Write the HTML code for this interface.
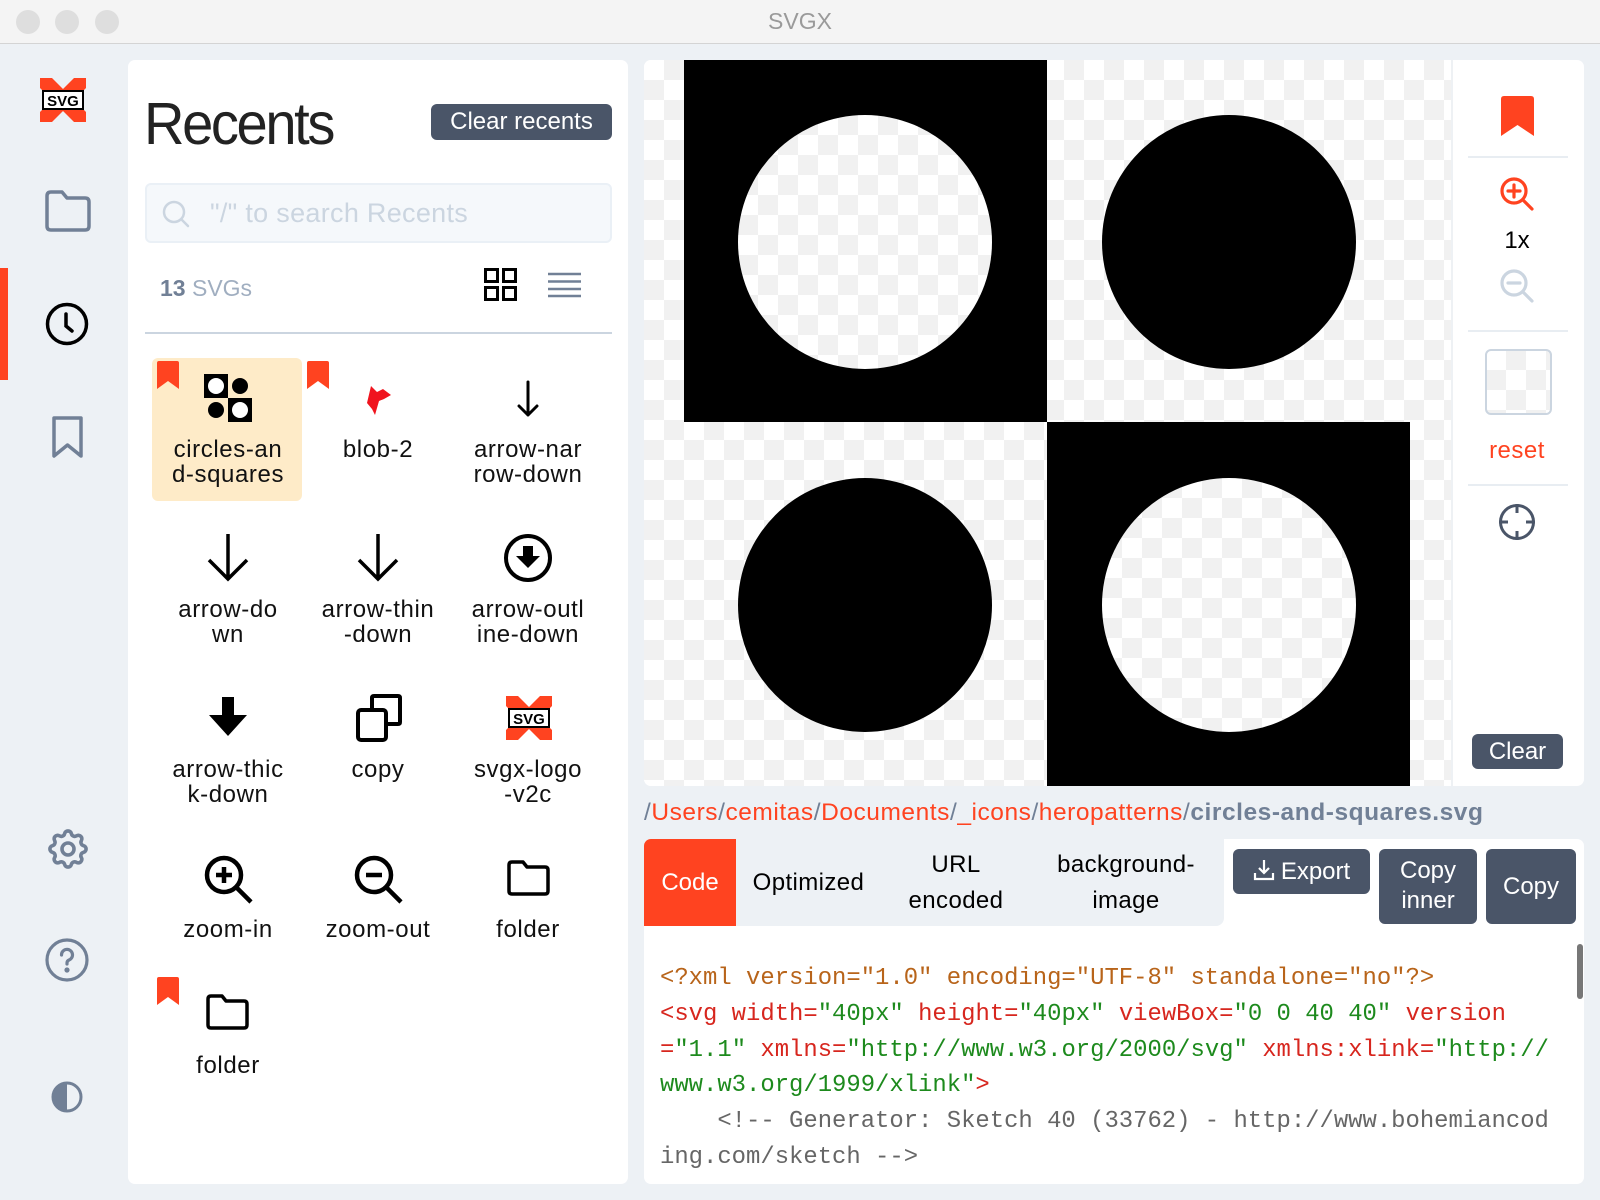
<!DOCTYPE html>
<html><head><meta charset="utf-8"><style>
*{box-sizing:border-box;margin:0;padding:0}
body{width:1600px;height:1200px;background:#edf1f5;font-family:"Liberation Sans",sans-serif;position:relative;overflow:hidden}
.a{position:absolute}
.tb{left:0;top:0;width:1600px;height:44px;background:#f4f4f4;border-bottom:1px solid #d4d4d4}
.dot{width:24px;height:24px;border-radius:50%;background:#dedede;top:10px}
.panel{background:#fff;border-radius:7px}
.lbl{font-size:24px;line-height:24.5px;color:#111;text-align:center;width:150px;letter-spacing:0.6px}
.btn{background:#4a5568;color:#fff;border-radius:6px;font-size:24px;text-align:center}
.code{font-family:"Liberation Mono",monospace;font-size:23.9px;line-height:35.8px;white-space:pre;left:660px;top:961px}
.o{color:#b8641a}.r{color:#d7261e}.g{color:#1d8a1d}.c{color:#666}
.chk{background-color:#fff;background-image:linear-gradient(45deg,#f1f1f1 25%,transparent 25%,transparent 75%,#f1f1f1 75%),linear-gradient(45deg,#f1f1f1 25%,transparent 25%,transparent 75%,#f1f1f1 75%);background-size:40px 40px;background-position:0 0,20px 20px}
.hr{height:2px;background:#e8edf2}
</style></head><body>
<div class="a tb"></div>
<div class="a dot" style="left:16px"></div><div class="a dot" style="left:55px"></div><div class="a dot" style="left:95px"></div>
<div class="a" style="left:0;top:8px;width:1600px;text-align:center;font-size:23px;color:#9a9a9a">SVGX</div>

<div class="a" style="left:0;top:268px;width:8px;height:112px;background:#ff4320"></div>
<svg class="a" style="left:40px;top:78px" width="46" height="44" viewBox="0 0 46 44"><path d="M0 0h12l11 11 11-11h12v10l-9 9v6l9 9v10H34L23 33 12 44H0V34l9-9v-6L0 10z" fill="#ff4320"/><rect x="3" y="13" width="40" height="18" fill="#fff" stroke="#000" stroke-width="2"/><text x="23" y="28" font-size="15" font-family="Liberation Sans" font-weight="bold" text-anchor="middle">SVG</text></svg>
<svg class="a" style="left:45px;top:190px" width="46" height="44" viewBox="0 0 46 44" fill="none" stroke="#718096" stroke-width="3.5" stroke-linejoin="round"><path d="M2 6q0-4 4-4h11l5 6h18q4 0 4 4v24q0 4-4 4H6q-4 0-4-4z"/></svg>
<svg class="a" style="left:45px;top:302px" width="44" height="44" viewBox="0 0 44 44" fill="none" stroke="#000" stroke-width="3.5" stroke-linecap="round"><circle cx="22" cy="22" r="19.5"/><path d="M21 12v12l6 5"/></svg>
<svg class="a" style="left:51px;top:415px" width="34" height="44" viewBox="0 0 34 44" fill="none" stroke="#718096" stroke-width="3.5" stroke-linejoin="round"><path d="M3 3h27v38L16.5 30 3 41z"/></svg>
<svg class="a" style="left:44px;top:825px" width="48" height="48" viewBox="0 0 24 24" fill="none" stroke="#718096" stroke-width="1.8"><path d="M10.3 4.3c.4-1.8 3-1.8 3.4 0a1.7 1.7 0 0 0 2.6 1.1c1.5-.9 3.3.8 2.4 2.4a1.7 1.7 0 0 0 1 2.5c1.8.4 1.8 3 0 3.4a1.7 1.7 0 0 0-1 2.6c.9 1.5-.9 3.3-2.4 2.4a1.7 1.7 0 0 0-2.6 1c-.4 1.8-3 1.8-3.4 0a1.7 1.7 0 0 0-2.6-1c-1.5.9-3.3-.9-2.4-2.4a1.7 1.7 0 0 0-1-2.6c-1.800-.4-1.8-3 0-3.4a1.7 1.7 0 0 0 1-2.5c-.9-1.6.9-3.3 2.4-2.4a1.7 1.7 0 0 0 2.6-1.1z"/><circle cx="12" cy="12" r="3"/></svg>
<svg class="a" style="left:45px;top:938px" width="44" height="44" viewBox="0 0 44 44" fill="none" stroke="#718096" stroke-width="3.2" stroke-linecap="round"><circle cx="22" cy="22" r="20"/><path d="M16.5 17a5.5 5.5 0 1 1 7.5 5c-1.4.6-2 1.5-2 3v1"/><circle cx="22" cy="32" r="1" fill="#718096"/></svg>
<svg class="a" style="left:51px;top:1081px" width="32" height="32" viewBox="0 0 32 32"><circle cx="16" cy="16" r="14" fill="none" stroke="#718096" stroke-width="3"/><path d="M16 2a14 14 0 0 0 0 28z" fill="#718096"/></svg>

<div class="a panel" style="left:128px;top:60px;width:500px;height:1124px"></div>
<div class="a" style="left:144px;top:90px;font-size:59px;color:#222;letter-spacing:-2.5px;transform:scaleX(0.95);transform-origin:left">Recents</div>
<div class="a btn" style="left:431px;top:104px;width:181px;height:36px;line-height:36px">Clear recents</div>
<div class="a" style="left:145px;top:183px;width:467px;height:60px;border:2px solid #eaf0f6;border-radius:6px;background:#f5f8fb"></div>
<svg class="a" style="left:161px;top:199px" width="30" height="30" viewBox="0 0 30 30" fill="none" stroke="#cbd5e0" stroke-width="2.5" stroke-linecap="round"><circle cx="13" cy="13" r="10"/><path d="M21 21l6 6"/></svg>
<div class="a" style="left:210px;top:198px;font-size:27px;color:#cbd5e0;letter-spacing:0.3px">"/" to search Recents</div>
<div class="a" style="left:160px;top:275px;font-size:23px;color:#a0aec0"><b style="color:#718096">13</b> SVGs</div>
<svg class="a" style="left:484px;top:268px" width="33" height="33" viewBox="0 0 33 33" fill="none" stroke="#000" stroke-width="3"><rect x="1.5" y="1.5" width="12" height="12"/><rect x="19.5" y="1.5" width="12" height="12"/><rect x="1.5" y="19.5" width="12" height="12"/><rect x="19.5" y="19.5" width="12" height="12"/></svg>
<svg class="a" style="left:548px;top:272px" width="33" height="26" viewBox="0 0 33 26" stroke="#718096" stroke-width="2.5"><path d="M0 2h33M0 9.5h33M0 17h33M0 24h33"/></svg>
<div class="a" style="left:145px;top:332px;width:467px;height:2px;background:#cbd5e0"></div>

<div class="a" style="left:152px;top:358px;width:150px;height:143px;background:#feebc8;border-radius:6px"></div>
<svg class="a" style="left:157px;top:361px" width="22" height="28" viewBox="0 0 22 28"><path d="M0 2q0-2 2-2h18q2 0 2 2v26l-11-8-11 8z" fill="#ff4320"/></svg>
<svg class="a" style="left:307px;top:361px" width="22" height="28" viewBox="0 0 22 28"><path d="M0 2q0-2 2-2h18q2 0 2 2v26l-11-8-11 8z" fill="#ff4320"/></svg>
<svg class="a" style="left:157px;top:977px" width="22" height="28" viewBox="0 0 22 28"><path d="M0 2q0-2 2-2h18q2 0 2 2v26l-11-8-11 8z" fill="#ff4320"/></svg>

<svg class="a" style="left:204px;top:374px" width="48" height="48" viewBox="0 0 48 48"><rect width="24" height="24"/><rect x="24" y="24" width="24" height="24"/><circle cx="12" cy="12" r="8" fill="#fff"/><circle cx="36" cy="12" r="8"/><circle cx="12" cy="36" r="8"/><circle cx="36" cy="36" r="8" fill="#fff"/></svg>
<svg class="a" style="left:361px;top:384px" width="34" height="36" viewBox="0 0 34 36"><path d="M10 2l6 6 6-3 8 6-7 4-5 2-4 14-3-6-5-6z" fill="#f0141e"/></svg>
<svg class="a" style="left:513px;top:380px" width="30" height="38" viewBox="0 0 30 38" fill="none" stroke="#000" stroke-width="3" stroke-linecap="round" stroke-linejoin="round"><path d="M15 2v33M6 26l9 9 9-9"/></svg>
<div class="a lbl" style="left:153px;top:438px">circles-an<br>d-squares</div>
<div class="a lbl" style="left:303px;top:438px">blob-2</div>
<div class="a lbl" style="left:453px;top:438px">arrow-nar<br>row-down</div>
<svg class="a" style="left:206px;top:534px" width="44" height="48" viewBox="0 0 44 48" fill="none" stroke="#000" stroke-width="3.5"><path d="M22 0v45M3 26l19 19 19-19"/></svg>
<svg class="a" style="left:356px;top:534px" width="44" height="48" viewBox="0 0 44 48" fill="none" stroke="#000" stroke-width="3.5"><path d="M22 0v45M3 26l19 19 19-19"/></svg>
<svg class="a" style="left:503px;top:534px" width="50" height="48" viewBox="0 0 50 48"><circle cx="25" cy="24" r="22" fill="none" stroke="#000" stroke-width="4"/><path d="M20 12h10v10h7L25 34 13 22h7z"/></svg>
<div class="a lbl" style="left:153px;top:598px">arrow-do<br>wn</div>
<div class="a lbl" style="left:303px;top:598px">arrow-thin<br>-down</div>
<div class="a lbl" style="left:453px;top:598px">arrow-outl<br>ine-down</div>
<svg class="a" style="left:208px;top:697px" width="40" height="40" viewBox="0 0 40 40"><path d="M14 0h12v18h13L20 39 1 18h13z"/></svg>
<svg class="a" style="left:354px;top:694px" width="50" height="50" viewBox="0 0 50 50" fill="none" stroke="#000" stroke-width="4" stroke-linejoin="round"><path d="M18 14V4q0-2 2-2h24q2 0 2 2v24q0 2-2 2h-12"/><rect x="4" y="16" width="28" height="30" rx="3"/></svg>
<svg class="a" style="left:506px;top:696px" width="46" height="44" viewBox="0 0 46 44"><path d="M0 0h12l11 11 11-11h12v10l-9 9v6l9 9v10H34L23 33 12 44H0V34l9-9v-6L0 10z" fill="#ff4320"/><rect x="3" y="13" width="40" height="18" fill="#fff" stroke="#000" stroke-width="2"/><text x="23" y="28" font-size="15" font-family="Liberation Sans" font-weight="bold" text-anchor="middle">SVG</text></svg>
<div class="a lbl" style="left:153px;top:758px">arrow-thic<br>k-down</div>
<div class="a lbl" style="left:303px;top:758px">copy</div>
<div class="a lbl" style="left:453px;top:758px">svgx-logo<br>-v2c</div>
<svg class="a" style="left:203px;top:854px" width="52" height="52" viewBox="0 0 52 52" fill="none" stroke="#000" stroke-width="4.5"><circle cx="21" cy="21" r="17"/><path d="M33 33l15 15M21 13v16M13 21h16"/></svg>
<svg class="a" style="left:353px;top:854px" width="52" height="52" viewBox="0 0 52 52" fill="none" stroke="#000" stroke-width="4.5"><circle cx="21" cy="21" r="17"/><path d="M33 33l15 15M13 21h16"/></svg>
<svg class="a" style="left:507px;top:860px" width="44" height="36" viewBox="0 0 44 36" fill="none" stroke="#000" stroke-width="3.5" stroke-linejoin="round"><path d="M2 5q0-3 3-3h11l4 5h18q3 0 3 3v21q0 3-3 3H5q-3 0-3-3z"/></svg>
<div class="a lbl" style="left:153px;top:918px">zoom-in</div>
<div class="a lbl" style="left:303px;top:918px">zoom-out</div>
<div class="a lbl" style="left:453px;top:918px">folder</div>
<svg class="a" style="left:206px;top:994px" width="44" height="36" viewBox="0 0 44 36" fill="none" stroke="#000" stroke-width="3.5" stroke-linejoin="round"><path d="M2 5q0-3 3-3h11l4 5h18q3 0 3 3v21q0 3-3 3H5q-3 0-3-3z"/></svg>
<div class="a lbl" style="left:153px;top:1054px">folder</div>

<div class="a panel" style="left:644px;top:60px;width:940px;height:726px;overflow:hidden">
 <div class="a chk" style="left:0;top:0;width:808px;height:726px"></div>
 <div class="a" style="left:40px;top:0;width:363px;height:362px;background:#000"></div>
 <div class="a" style="left:403px;top:362px;width:363px;height:364px;background:#000"></div>
 <div class="a chk" style="left:94px;top:55px;width:254px;height:254px;border-radius:50%"></div>
 <div class="a" style="left:458px;top:55px;width:254px;height:254px;border-radius:50%;background:#000"></div>
 <div class="a" style="left:94px;top:418px;width:254px;height:254px;border-radius:50%;background:#000"></div>
 <div class="a chk" style="left:458px;top:418px;width:254px;height:254px;border-radius:50%"></div>
 <div class="a" style="left:807px;top:0;width:2px;height:726px;background:#eef1f4"></div>
</div>
<svg class="a" style="left:1501px;top:96px" width="33" height="40" viewBox="0 0 33 40"><path d="M0 3q0-3 3-3h27q3 0 3 3v37l-16.5-11L0 40z" fill="#ff4320"/></svg>
<div class="a hr" style="left:1468px;top:156px;width:100px"></div>
<svg class="a" style="left:1499px;top:176px" width="36" height="36" viewBox="0 0 36 36" fill="none" stroke="#ff4320" stroke-width="3.2" stroke-linecap="round"><circle cx="15" cy="15" r="12"/><path d="M24 24l9 9M15 9v12M9 15h12"/></svg>
<div class="a" style="left:1467px;top:227px;width:100px;text-align:center;font-size:24px">1x</div>
<svg class="a" style="left:1499px;top:268px" width="36" height="36" viewBox="0 0 36 36" fill="none" stroke="#cbd5e0" stroke-width="3.2" stroke-linecap="round"><circle cx="15" cy="15" r="12"/><path d="M24 24l9 9M9 15h12"/></svg>
<div class="a hr" style="left:1468px;top:330px;width:100px"></div>
<div class="a chk" style="left:1485px;top:349px;width:67px;height:66px;border:2px solid #cbd5e0;border-radius:6px;background-position:-1px -1px,19px 19px"></div>
<div class="a" style="left:1467px;top:437px;width:100px;text-align:center;font-size:24px;color:#ff4320;letter-spacing:0.5px">reset</div>
<div class="a hr" style="left:1468px;top:484px;width:100px"></div>
<svg class="a" style="left:1498px;top:503px" width="38" height="38" viewBox="0 0 38 38" fill="none" stroke="#4a5568" stroke-width="3"><circle cx="19" cy="19" r="16.5"/><path d="M19 1v9M19 28v9M1 19h9M28 19h9"/></svg>
<div class="a btn" style="left:1472px;top:734px;width:91px;height:35px;line-height:35px">Clear</div>

<div class="a" style="left:644px;top:799px;font-size:24.5px;color:#718096;white-space:nowrap;letter-spacing:0.55px">/<span style="color:#ff4320">Users</span>/<span style="color:#ff4320">cemitas</span>/<span style="color:#ff4320">Documents</span>/<span style="color:#ff4320">_icons</span>/<span style="color:#ff4320">heropatterns</span>/<b>circles-and-squares.svg</b></div>

<div class="a panel" style="left:644px;top:839px;width:940px;height:345px;overflow:hidden">
 <div class="a" style="left:0;top:0;width:580px;height:87px;background:#edf1f5;border-radius:0 0 8px 0"></div>
 <div class="a" style="left:0;top:0;width:92px;height:87px;background:#ff4320;color:#fff;font-size:24px;line-height:87px;text-align:center">Code</div>
 <div class="a" style="left:92px;top:0;width:145px;height:87px;font-size:24px;line-height:87px;text-align:center;letter-spacing:0.4px">Optimized</div>
 <div class="a" style="left:237px;top:8px;width:150px;font-size:24px;line-height:36px;text-align:center;letter-spacing:0.4px">URL<br>encoded</div>
 <div class="a" style="left:387px;top:8px;width:190px;font-size:24px;line-height:36px;text-align:center;letter-spacing:0.4px">background-<br>image</div>
 <div class="a" style="left:933px;top:105px;width:6px;height:55px;background:#777;border-radius:3px"></div>
</div>
<div class="a btn" style="left:1233px;top:849px;width:137px;height:45px;line-height:45px"><svg width="22" height="22" viewBox="0 0 22 22" fill="none" stroke="#fff" stroke-width="2.2" style="vertical-align:-2px;margin-right:6px"><path d="M11 1v13M6 9l5 5 5-5M2 14v6h18v-6"/></svg>Export</div>
<div class="a btn" style="left:1379px;top:849px;width:98px;height:75px;line-height:30px;padding-top:7px">Copy<br>inner</div>
<div class="a btn" style="left:1486px;top:849px;width:90px;height:75px;line-height:75px">Copy</div>
<div class="a code"><span class="o">&lt;?xml version="1.0" encoding="UTF-8" standalone="no"?&gt;</span>
<span class="r">&lt;svg width=</span><span class="g">"40px"</span> <span class="r">height=</span><span class="g">"40px"</span> <span class="r">viewBox=</span><span class="g">"0 0 40 40"</span> <span class="r">version</span>
<span class="r">=</span><span class="g">"1.1"</span> <span class="r">xmlns=</span><span class="g">"http://www.w3.org/2000/svg"</span> <span class="r">xmlns:xlink=</span><span class="g">"http://</span>
<span class="g">www.w3.org/1999/xlink"</span><span class="r">&gt;</span>
<span class="c">    &lt;!-- Generator: Sketch 40 (33762) - http://www.bohemiancod</span>
<span class="c">ing.com/sketch --&gt;</span></div>
</body></html>
